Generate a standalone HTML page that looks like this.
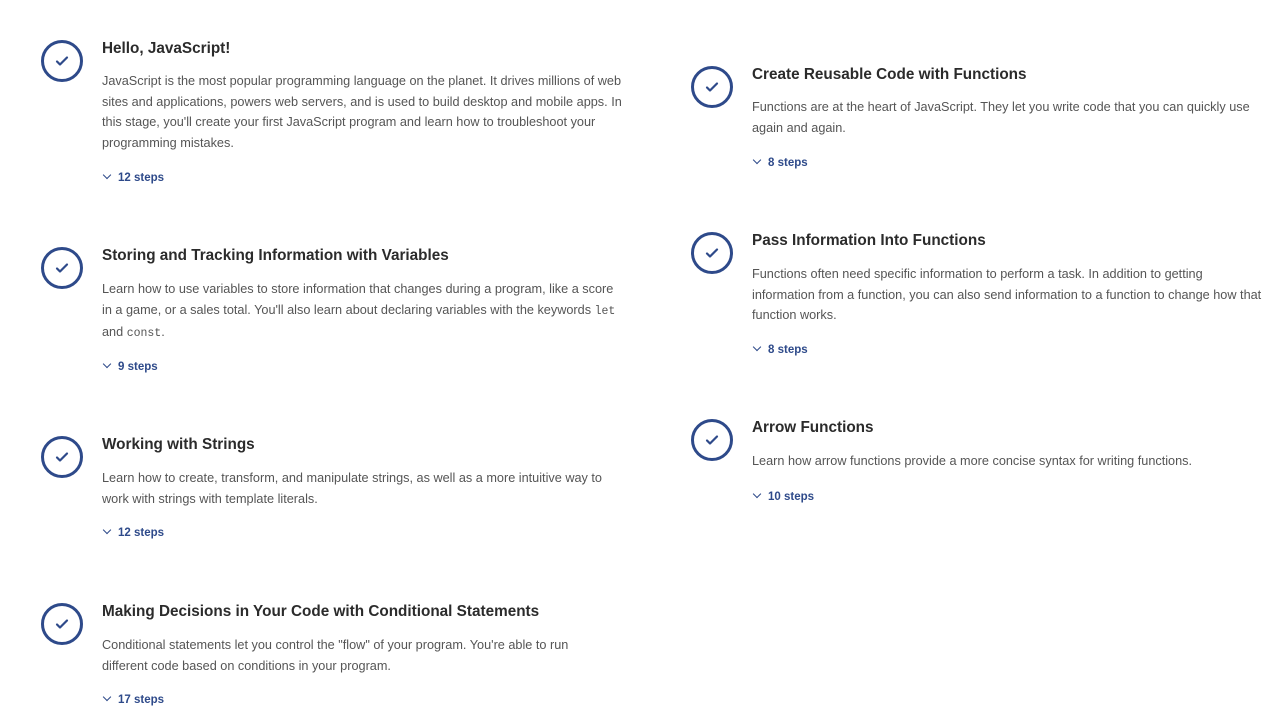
<!DOCTYPE html>
<html><head><style>
body{margin:0;width:1280px;height:720px;background:#fff;position:relative;overflow:hidden;font-family:"Liberation Sans",sans-serif}
.c{position:absolute;width:42px;height:42px;border:3.5px solid #2e4a8a;border-radius:50%;box-sizing:border-box}
.c svg{position:absolute;left:11px;top:11px}
.t{position:absolute;font-size:15.3px;font-weight:bold;color:#2b2b2b;white-space:nowrap;transform:translateY(-50%);margin-top:2px}
.d{position:absolute;font-size:12.7px;color:#555;line-height:20.5px;white-space:nowrap}
.d code{font-family:"Liberation Mono",monospace;font-size:11.5px}
.s{position:absolute;font-size:11.5px;font-weight:bold;color:#2e4a8a;white-space:nowrap;transform:translateY(-50%)}
.s:before{content:"";display:inline-block;width:5px;height:5px;border-right:1.8px solid #2e4a8a;border-bottom:1.8px solid #2e4a8a;transform:rotate(45deg);margin:0 8px 3px 2px}
</style></head><body>
<div class="c" style="left:41px;top:40px"><svg width="14" height="14" viewBox="0 0 14 14"><path d="M2 7.5l3 3 7-7" fill="none" stroke="#2e4a8a" stroke-width="2.2" stroke-linecap="round" stroke-linejoin="round"/></svg></div>
<div class="t" style="left:102px;top:47px">Hello, JavaScript!</div>
<div class="d" style="left:102px;top:71px">JavaScript is the most popular programming language on the planet. It drives millions of web<br>sites and applications, powers web servers, and is used to build desktop and mobile apps. In<br>this stage, you'll create your first JavaScript program and learn how to troubleshoot your<br>programming mistakes.</div>
<div class="s" style="left:102px;top:178px">12 steps</div>

<div class="c" style="left:41px;top:247px"><svg width="14" height="14" viewBox="0 0 14 14"><path d="M2 7.5l3 3 7-7" fill="none" stroke="#2e4a8a" stroke-width="2.2" stroke-linecap="round" stroke-linejoin="round"/></svg></div>
<div class="t" style="left:102px;top:254px">Storing and Tracking Information with Variables</div>
<div class="d" style="left:102px;top:279px">Learn how to use variables to store information that changes during a program, like a score<br>in a game, or a sales total. You'll also learn about declaring variables with the keywords <code>let</code><br>and <code>const</code>.</div>
<div class="s" style="left:102px;top:367px">9 steps</div>

<div class="c" style="left:41px;top:436px"><svg width="14" height="14" viewBox="0 0 14 14"><path d="M2 7.5l3 3 7-7" fill="none" stroke="#2e4a8a" stroke-width="2.2" stroke-linecap="round" stroke-linejoin="round"/></svg></div>
<div class="t" style="left:102px;top:443px">Working with Strings</div>
<div class="d" style="left:102px;top:468px">Learn how to create, transform, and manipulate strings, as well as a more intuitive way to<br>work with strings with template literals.</div>
<div class="s" style="left:102px;top:533px">12 steps</div>

<div class="c" style="left:41px;top:603px"><svg width="14" height="14" viewBox="0 0 14 14"><path d="M2 7.5l3 3 7-7" fill="none" stroke="#2e4a8a" stroke-width="2.2" stroke-linecap="round" stroke-linejoin="round"/></svg></div>
<div class="t" style="left:102px;top:610px">Making Decisions in Your Code with Conditional Statements</div>
<div class="d" style="left:102px;top:635px">Conditional statements let you control the "flow" of your program. You're able to run<br>different code based on conditions in your program.</div>
<div class="s" style="left:102px;top:700px">17 steps</div>

<div class="c" style="left:691px;top:66px"><svg width="14" height="14" viewBox="0 0 14 14"><path d="M2 7.5l3 3 7-7" fill="none" stroke="#2e4a8a" stroke-width="2.2" stroke-linecap="round" stroke-linejoin="round"/></svg></div>
<div class="t" style="left:752px;top:73px">Create Reusable Code with Functions</div>
<div class="d" style="left:752px;top:97px">Functions are at the heart of JavaScript. They let you write code that you can quickly use<br>again and again.</div>
<div class="s" style="left:752px;top:163px">8 steps</div>

<div class="c" style="left:691px;top:232px"><svg width="14" height="14" viewBox="0 0 14 14"><path d="M2 7.5l3 3 7-7" fill="none" stroke="#2e4a8a" stroke-width="2.2" stroke-linecap="round" stroke-linejoin="round"/></svg></div>
<div class="t" style="left:752px;top:239px">Pass Information Into Functions</div>
<div class="d" style="left:752px;top:264px">Functions often need specific information to perform a task. In addition to getting<br>information from a function, you can also send information to a function to change how that<br>function works.</div>
<div class="s" style="left:752px;top:350px">8 steps</div>

<div class="c" style="left:691px;top:419px"><svg width="14" height="14" viewBox="0 0 14 14"><path d="M2 7.5l3 3 7-7" fill="none" stroke="#2e4a8a" stroke-width="2.2" stroke-linecap="round" stroke-linejoin="round"/></svg></div>
<div class="t" style="left:752px;top:426px">Arrow Functions</div>
<div class="d" style="left:752px;top:451px">Learn how arrow functions provide a more concise syntax for writing functions.</div>
<div class="s" style="left:752px;top:497px">10 steps</div>
</body></html>
